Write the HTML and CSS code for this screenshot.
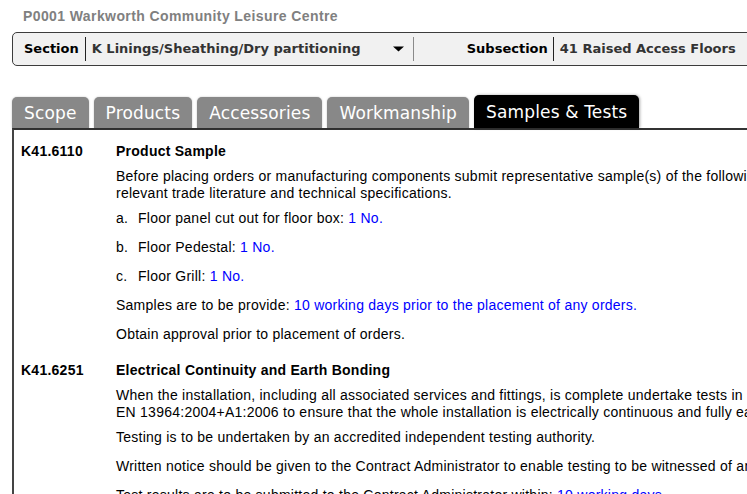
FILE: index.html
```html
<!DOCTYPE html>
<html lang="en">
<head>
<meta charset="utf-8">
<title>Samples &amp; Tests</title>
<link rel="stylesheet" href="styles.css">
</head>
<body>
<div class="page">
  <div class="project">P0001 Warkworth Community Leisure Centre</div>

  <div class="nav-bar">
    <span class="nav-label">Section</span>
    <span class="nav-select">
      <span class="nav-value">K Linings/Sheathing/Dry partitioning</span>
      <svg class="caret" width="11" height="6" viewBox="0 0 11 6"><path d="M0 0.5H11L5.5 5.5Z" fill="#000"/></svg>
    </span>
    <span class="nav-label nav-label-sub">Subsection</span>
    <span class="nav-value nav-value-sub">41 Raised Access Floors</span>
  </div>

  <div class="tabs">
    <div class="tab">Scope</div>
    <div class="tab">Products</div>
    <div class="tab">Accessories</div>
    <div class="tab">Workmanship</div>
    <div class="tab tab-active">Samples &amp; Tests</div>
  </div>

  <div class="panel">
    <div class="clause">
      <div class="clause-no">K41.6110</div>
      <div class="clause-body">
        <div class="clause-title">Product Sample</div>
        <p class="desc">Before placing orders or manufacturing components submit representative sample(s) of the following items together with<br>relevant trade literature and technical specifications.</p>
        <div class="item"><span class="marker">a.</span><span>Floor panel cut out for floor box: <span class="val">1 No.</span></span></div>
        <div class="item"><span class="marker">b.</span><span>Floor Pedestal: <span class="val">1 No.</span></span></div>
        <div class="item"><span class="marker">c.</span><span>Floor Grill: <span class="val">1 No.</span></span></div>
        <p class="para">Samples are to be provide: <span class="val">10 working days prior to the placement of any orders.</span></p>
        <p class="para">Obtain approval prior to placement of orders.</p>
      </div>
    </div>

    <div class="clause">
      <div class="clause-no">K41.6251</div>
      <div class="clause-body">
        <div class="clause-title">Electrical Continuity and Earth Bonding</div>
        <p class="desc">When the installation, including all associated services and fittings, is complete undertake tests in accordance with BS<br>EN 13964:2004+A1:2006 to ensure that the whole installation is electrically continuous and fully earthed.</p>
        <p class="para">Testing is to be undertaken by an accredited independent testing authority.</p>
        <p class="para">Written notice should be given to the Contract Administrator to enable testing to be witnessed of any tests.</p>
        <p class="para">Test results are to be submitted to the Contract Administrator within: <span class="val">10 working days.</span></p>
      </div>
    </div>
  </div>
</div>
</body>
</html>
```

FILE: styles.css
```css
html, body {
  margin: 0;
  padding: 0;
  background: #fff;
  overflow: hidden;
}

.page {
  width: 1200px;
  padding: 8px 0 0 12px;
  font-family: "Liberation Sans", Arial, sans-serif;
  color: #000;
}

.project {
  padding-left: 11px;
  font-size: 14px;
  line-height: 17px;
  font-weight: bold;
  letter-spacing: 0.4px;
  color: #808080;
  margin-bottom: 7px;
}

.nav-bar {
  display: flex;
  align-items: center;
  height: 34px;
  box-sizing: border-box;
  padding: 4px 0 4px 11px;
  border: 1px solid #3c3c3c;
  border-radius: 5px;
  background: #f1f1f1;
  font-family: "DejaVu Sans", Verdana, sans-serif;
  font-size: 13px;
  font-weight: bold;
  line-height: 24px;
}

.nav-label {
  color: #000;
  padding-right: 6px;
  border-right: 1px solid #222;
  height: 24px;
}

.nav-label-sub {
  margin-left: 53px;
  padding-right: 5px;
}

.nav-select {
  display: flex;
  align-items: center;
  justify-content: space-between;
  box-sizing: border-box;
  width: 328px;
  height: 24px;
  padding: 0 9px 0 6px;
  border-right: 1px solid #8a8a8a;
}

.nav-value {
  color: #333;
}

.nav-value-sub {
  padding-left: 6px;
}

.caret {
  display: block;
}

.tabs {
  display: flex;
  align-items: flex-end;
  gap: 5px;
  margin-top: 30px;
  height: 32px;
  font-family: "DejaVu Sans", Verdana, sans-serif;
  font-size: 17px;
  letter-spacing: 0.15px;
}

.tab {
  height: 31px;
  line-height: 32px;
  padding: 0 12px;
  background: #888;
  color: #fff;
  border-radius: 5px 5px 0 0;
  box-shadow: 0 0 2px rgba(0, 0, 0, 0.25);
}

.tab-active {
  height: 33px;
  line-height: 35px;
  background: #000;
  box-shadow: 1px 0 3px rgba(0, 0, 0, 0.35);
}

.panel {
  border-top: 2px solid #333;
  border-left: 2px solid #444;
  padding: 13px 0 0 7px;
  font-size: 14px;
  line-height: 17px;
  letter-spacing: 0.25px;
}

.clause {
  display: grid;
  grid-template-columns: 95px 1fr;
}

.clause + .clause {
  margin-top: 19px;
}

.clause-no,
.clause-title {
  font-weight: bold;
}

.desc,
.para {
  margin: 0;
}

.clause-body > * + * {
  margin-top: 12px;
}

.clause-body > .desc,
.clause-body > .desc + * {
  margin-top: 8px;
}

.item {
  display: flex;
}

.marker {
  width: 22px;
  flex: none;
}

.val {
  color: #0000ff;
}
```
